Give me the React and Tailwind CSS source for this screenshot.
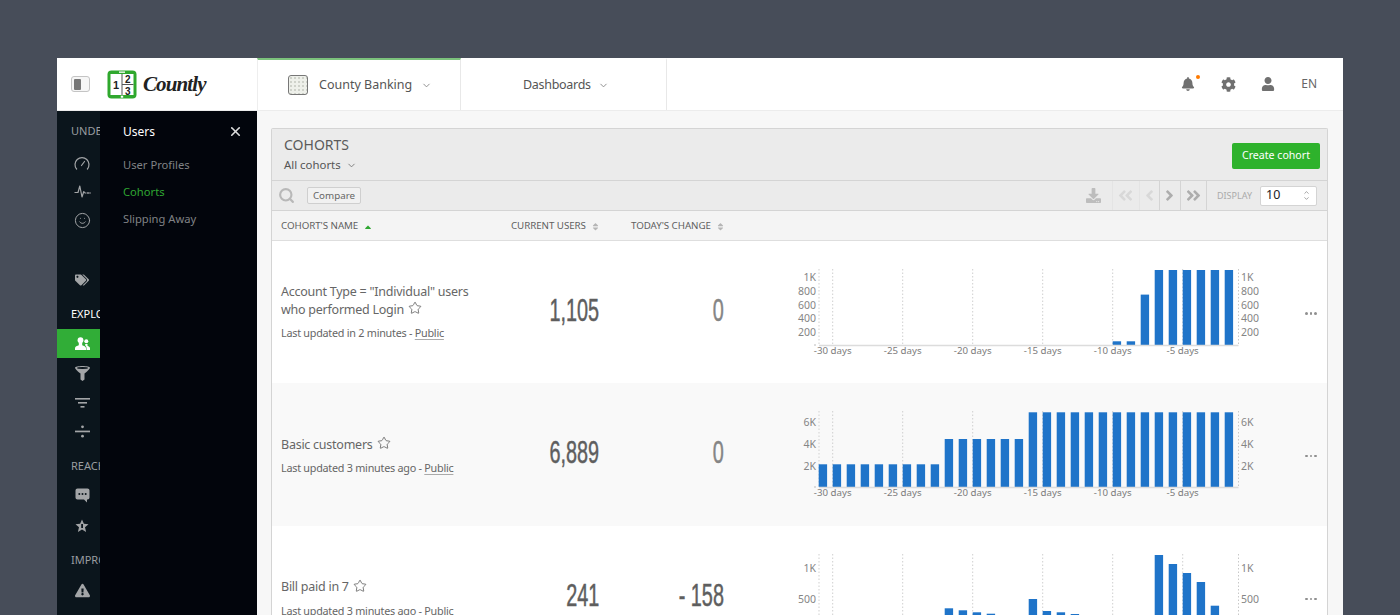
import React from "react";
import { Smile, ChevronDown, Star, X, Search } from "lucide-react";
import { FaTags, FaExclamationTriangle, FaBell, FaCog, FaUser, FaDownload, FaAngleDoubleLeft, FaAngleDoubleRight, FaAngleLeft, FaAngleRight, FaCaretUp, FaCaretDown } from "react-icons/fa";

const BX = (i) => 38.7 + 14 * i;
const TICKS = [
  [52.7, "-30 days"], [122.7, "-25 days"], [192.7, "-20 days"], [262.7, "-15 days"], [332.7, "-10 days"], [402.7, "-5 days"],
];

function Chart({ bars, labels }) {
  return (
    <svg width="520" height="143" viewBox="0 0 520 143" className="shrink-0">
      <line x1="39" y1="28" x2="39" y2="104" stroke="#d8d8d8" strokeWidth="1.2" strokeDasharray="1.5 2" />
      <line x1="458.5" y1="28" x2="458.5" y2="104" stroke="#c8c8c8" strokeWidth="1" strokeDasharray="1.5 2" />
      {TICKS.map(([x]) => (
        <line key={x} x1={x} y1="28" x2={x} y2="104" stroke="#cfcfcf" strokeWidth="1" strokeDasharray="1.5 2" />
      ))}
      <line x1="34" y1="104" x2="36" y2="104" stroke="#bbb" strokeWidth="1" />
      {Object.entries(bars).map(([i, h]) => (
        <rect key={i} x={BX(+i)} y={104 - h} width="8.4" height={h} fill="#1f74c9" />
      ))}
      <line x1="39" y1="104.5" x2="458.5" y2="104.5" stroke="#dcdcdc" strokeWidth="1.6" />
      {labels.map(([t, y]) => (
        <React.Fragment key={t}>
          <text x="36" y={y} textAnchor="end" dominantBaseline="middle" fill="#858585" fontSize="10.5" fontFamily="'Noto Sans', sans-serif">{t}</text>
          <text x="461" y={y} textAnchor="start" dominantBaseline="middle" fill="#858585" fontSize="10.5" fontFamily="'Noto Sans', sans-serif">{t}</text>
        </React.Fragment>
      ))}
      {TICKS.map(([x, t]) => (
        <text key={t} x={x} y="110.6" textAnchor="middle" dominantBaseline="middle" fill="#7c7c7c" fontSize="9.7" fontFamily="'Noto Sans', sans-serif">{t}</text>
      ))}
    </svg>
  );
}

function range(a, b, h) {
  const o = {};
  for (let i = a; i <= b; i++) o[i] = h;
  return o;
}

const rows = [
  {
    name: <>Account Type = "Individual" users<br />who performed Login</>,
    meta: "Last updated in 2 minutes - ",
    users: "1,105",
    change: "0",
    changeDark: false,
    bg: "bg-white",
    h: "h-[142px]",
    nameShift: "pt-0",
    bars: { 21: 3.7, 22: 3.7, 23: 50.4, ...range(24, 29, 75) },
    labels: [["1K", 37], ["800", 51], ["600", 65], ["400", 78.5], ["200", 92]],
  },
  {
    name: "Basic customers",
    meta: "Last updated 3 minutes ago - ",
    users: "6,889",
    change: "0",
    changeDark: false,
    bg: "bg-[#f9f9f9]",
    h: "h-[143px]",
    nameShift: "pt-[3px]",
    bars: { ...range(0, 8, 22.7), ...range(9, 14, 48), ...range(15, 29, 74.7) },
    labels: [["6K", 40], ["4K", 62], ["2K", 83.7]],
  },
  {
    name: "Bill paid in 7",
    meta: "Last updated 3 minutes ago - ",
    users: "241",
    change: "- 158",
    changeDark: true,
    bg: "bg-white",
    h: "h-[143px]",
    nameShift: "pt-[2px]",
    bars: { 9: 21.7, 10: 19.7, 11: 17.7, 12: 16.3, 15: 31, 16: 19, 17: 17.7, 18: 16, 24: 75, 25: 66, 26: 57, 27: 48, 28: 24.3 },
    labels: [["1K", 43.5], ["500", 74.5]],
  },
];

function Row({ r }) {
  return (
    <div className={`flex items-center shrink-0 ${r.h} ${r.bg}`}>
      <div className={`w-[230px] shrink-0 pl-[9px] ${r.nameShift}`}>
        <div className="text-[12.5px] leading-[18px] text-[#666] tracking-[-0.25px]">
          {r.name}
          <Star className="inline-block ml-[4px] mb-[5px] text-[#555]" size={14} strokeWidth={1.3} />
        </div>
        <div className="mt-[5px] text-[10.8px] leading-[16px] text-[#666] tracking-[-0.25px]">
          {r.meta}
          <span className="underline underline-offset-2 decoration-[#aaa]">Public</span>
        </div>
      </div>
      <div className="w-[97px] shrink-0 text-right -mt-[4px]">
        <span className="inline-block origin-right scale-x-[0.62] text-[32px] leading-none text-[#5e5e5e] [-webkit-text-stroke:0.5px_currentColor] font-['Liberation_Sans_Narrow','Liberation_Sans',sans-serif]">{r.users}</span>
      </div>
      <div className="w-[125px] shrink-0 text-right -mt-[4px]">
        <span className={`inline-block origin-right scale-x-[0.62] text-[32px] leading-none [-webkit-text-stroke:0.5px_currentColor] font-['Liberation_Sans_Narrow','Liberation_Sans',sans-serif] ${r.changeDark ? "text-[#5e5e5e]" : "text-[#858585]"}`}>{r.change}</span>
      </div>
      <div className="ml-[56px]">
        <Chart bars={r.bars} labels={r.labels} />
      </div>
      <div className="ml-[5px] mt-[3px] flex gap-[2px]">
        <span className="size-[2.5px] rounded-full bg-[#8f8f8f]" />
        <span className="size-[2.5px] rounded-full bg-[#8f8f8f]" />
        <span className="size-[2.5px] rounded-full bg-[#8f8f8f]" />
      </div>
    </div>
  );
}

function SortHead({ label, w, active }) {
  return (
    <div className={`flex items-center gap-[5px] ${w} shrink-0`}>
      <span className="text-[9.75px] text-[#5f5f5f] uppercase tracking-[-0.05px]">{label}</span>
      {active ? (
        <FaCaretUp size={10} className="text-[#2fa732] mt-[1px]" />
      ) : (
        <span className="flex flex-col text-[#b5b5b5] -space-y-[5px]">
          <FaCaretUp size={9} />
          <FaCaretDown size={9} />
        </span>
      )}
    </div>
  );
}

function RailIcon({ children, active, className = "" }) {
  return (
    <div className={`h-[29px] shrink-0 flex items-center justify-center pl-[7px] ${active ? "bg-[#31ad37] text-white" : "text-[#a3a5a7]"} ${className}`}>
      {children}
    </div>
  );
}

function RailLabel({ children, white, className = "" }) {
  return (
    <div className={`h-[18px] shrink-0 pl-[14px] text-[11px] leading-[18px] whitespace-nowrap overflow-hidden ${white ? "text-white" : "text-[#9a9da0]"} ${className}`}>
      {children}
    </div>
  );
}

function Logo() {
  return (
    <div className="flex items-center gap-[6px]">
      <svg width="30" height="29" viewBox="0 0 30 29">
        <rect x="0.5" y="0.5" width="29" height="28" rx="4" fill="#2fa82d" />
        <rect x="3.5" y="4" width="23" height="21" fill="#fff" />
        <rect x="12" y="1.5" width="6" height="1.3" fill="#fff" />
        <rect x="13.8" y="25.7" width="2.4" height="2" fill="#fff" />
        <line x1="15" y1="4" x2="15" y2="25" stroke="#555" strokeWidth="1" />
        <line x1="15" y1="14.5" x2="26.5" y2="14.5" stroke="#555" strokeWidth="1" />
        <text x="6" y="19" fontSize="11" fontWeight="700" fill="#222" fontFamily="'Liberation Sans', sans-serif">1</text>
        <text x="18" y="13" fontSize="10" fontWeight="700" fill="#222" fontFamily="'Liberation Sans', sans-serif">2</text>
        <text x="18" y="24.5" fontSize="10" fontWeight="700" fill="#222" fontFamily="'Liberation Sans', sans-serif">3</text>
      </svg>
      <span className="text-[21px] leading-none font-bold italic text-[#222] tracking-[-0.9px] font-['Liberation_Serif',serif]">Countly</span>
    </div>
  );
}

export default function App() {
  return (
    <div className="h-[615px] overflow-hidden bg-[#474d59] pt-[58px] px-[57px] font-['Noto_Sans',sans-serif]">
      <div className="h-[557px] w-[1286px] bg-white flex flex-col overflow-hidden">
        {/* top bar */}
        <div className="h-[53px] shrink-0 flex items-stretch bg-white border-b border-[#ececec]">
          <div className="w-[200px] shrink-0 flex items-center pl-[14px]">
            <div className="w-[19px] h-[16px] rounded-[3px] border border-[#c4c4c4] bg-[#f6f6f6] flex p-[1.5px] mr-[17px]">
              <span className="w-[7px] h-full bg-[#777] rounded-[1px]" />
            </div>
            <Logo />
          </div>
          <div className="w-[204px] shrink-0 border-t-2 border-[#7cc27c] border-r border-r-[#e8e8e8] border-l border-l-[#eeeeee] flex items-center pl-[30px]">
            <div className="size-[20px] rounded-[3px] border border-[#777] bg-[#eef0ea] mr-[11px] bg-[radial-gradient(#cfd2ca_1px,transparent_1px)] bg-[length:4px_4px]" />
            <span className="text-[12.5px] text-[#555]">County Banking</span>
            <ChevronDown size={11} className="ml-[9px] text-[#888]" />
          </div>
          <div className="w-[206px] shrink-0 border-t-2 border-t-transparent border-r border-[#e8e8e8] flex items-center pl-[62px]">
            <span className="text-[12.5px] text-[#555] tracking-[-0.3px]">Dashboards</span>
            <ChevronDown size={11} className="ml-[7px] text-[#888]" />
          </div>
          <div className="flex-1 flex items-center justify-end pr-[26px] text-[#707070]">
            <div className="relative mr-[26px]">
              <FaBell size={14} />
              <span className="absolute -top-[2px] -right-[5px] size-[4px] rounded-full bg-[#ff7a00]" />
            </div>
            <FaCog size={15} className="mr-[25px]" />
            <FaUser size={14} className="mr-[26px]" />
            <span className="text-[12px] text-[#666]">EN</span>
          </div>
        </div>

        <div className="flex-1 flex min-h-0">
          {/* rail */}
          <div className="w-[43px] shrink-0 bg-[#0b151c] flex flex-col pt-[11px]">
            <RailLabel>UNDERSTAND</RailLabel>
            <div className="mt-2" />
            <RailIcon>
              <svg width="16" height="14" viewBox="0 0 16 14" fill="none" stroke="#a3a5a7" strokeWidth="1.2" strokeLinecap="round">
                <path d="M2.6 13A7 7 0 1 1 13.4 13" />
                <path d="M7.5 9.5L10.5 5.5" />
              </svg>
            </RailIcon>
            <RailIcon>
              <svg width="17" height="15" viewBox="0 0 17 15" fill="none" stroke="#a3a5a7" strokeWidth="1.2" strokeLinejoin="round">
                <path d="M0.5 8.5H4L5.8 2L8 13L9.8 7.5L11 9H12.5" />
                <circle cx="14" cy="9" r="0.9" fill="#a3a5a7" stroke="none" />
                <circle cx="16" cy="9" r="0.8" fill="#a3a5a7" stroke="none" />
              </svg>
            </RailIcon>
            <RailIcon><Smile size={17} strokeWidth={1.4} /></RailIcon>
            <div className="h-[30px] shrink-0" />
            <RailIcon><FaTags size={14} /></RailIcon>
            <RailLabel white className="mt-[11px]">EXPLORE</RailLabel>
            <div className="mt-[6px]" />
            <RailIcon active>
              <svg width="15" height="13" viewBox="0 0 15 13" fill="#fff">
                <circle cx="5.5" cy="3.2" r="2.9" />
                <path d="M0 13V11.2C0 9.5 2.3 8.6 3.8 8.2V6H7.2V8.2C8.7 8.6 11 9.5 11 11.2V13Z" />
                <circle cx="11.3" cy="4.2" r="2" />
                <path d="M11.5 13H15V11.2C15 10 13.5 9.2 12.5 8.8V7H10.2V8.5C11.2 9.2 11.5 10.2 11.5 11.5Z" />
              </svg>
            </RailIcon>
            <div className="mt-[1px]" />
            <RailIcon>
              <svg width="15" height="15" viewBox="0 0 15 15" fill="#a3a5a7">
                <path d="M0 1.8C0 0.8 3.4 0 7.5 0S15 0.8 15 1.8C15 2.6 13.5 4.5 9.5 7.5V13.5L7.5 15L5.5 13.5V7.5C1.5 4.5 0 2.6 0 1.8Z" />
                <ellipse cx="7.5" cy="2" rx="5.5" ry="0.9" fill="#0b151c" />
              </svg>
            </RailIcon>
            <RailIcon>
              <svg width="15" height="12" viewBox="0 0 15 12" fill="#a3a5a7">
                <rect x="0" y="1" width="15" height="1.6" />
                <rect x="3" y="5" width="9" height="1.6" />
                <rect x="5.5" y="9" width="4" height="1.6" />
              </svg>
            </RailIcon>
            <RailIcon>
              <svg width="15" height="13" viewBox="0 0 15 13" fill="#a3a5a7">
                <rect x="0" y="5.6" width="15" height="1.7" />
                <circle cx="7.5" cy="1.8" r="1.4" />
                <circle cx="7.5" cy="11.2" r="1.4" />
              </svg>
            </RailIcon>
            <RailLabel className="mt-[11px]">REACH</RailLabel>
            <div className="mt-[6px]" />
            <RailIcon>
              <svg width="15" height="15" viewBox="0 0 15 15">
                <path d="M2.5 0.5H12.5C13.6 0.5 14.5 1.4 14.5 2.5V9.5C14.5 10.6 13.6 11.5 12.5 11.5H12V14.5L9 11.5H2.5C1.4 11.5 0.5 10.6 0.5 9.5V2.5C0.5 1.4 1.4 0.5 2.5 0.5Z" fill="#a3a5a7" />
                <circle cx="4.3" cy="6" r="1" fill="#0b151c" />
                <circle cx="7.5" cy="6" r="1" fill="#0b151c" />
                <circle cx="10.7" cy="6" r="1" fill="#0b151c" />
              </svg>
            </RailIcon>
            <div className="mt-[1px]" />
            <RailIcon>
              <svg width="14" height="14" viewBox="0 0 14 14">
                <path d="M7 0.5L8.9 4.8L13.5 5.2L10 8.3L11.1 13L7 10.5L2.9 13L4 8.3L0.5 5.2L5.1 4.8Z" fill="#a3a5a7" />
                <rect x="6.2" y="5" width="1.8" height="4" fill="#0b151c" />
              </svg>
            </RailIcon>
            <RailLabel className="mt-[11px]">IMPROVE</RailLabel>
            <div className="mt-[7px]" />
            <RailIcon><FaExclamationTriangle size={15} /></RailIcon>
          </div>
          {/* sub nav */}
          <div className="w-[157px] shrink-0 bg-[#02050c] pt-[11px] pl-[23px] pr-[14px]">
            <div className="flex items-center justify-between h-[19px] text-white">
              <span className="text-[12px]">Users</span>
              <X size={15} strokeWidth={2.6} className="text-[#ddd]" />
            </div>
            <div className="mt-[15px] flex flex-col gap-[9px] text-[11.2px] leading-[18px] text-[#808285]">
              <span>User Profiles</span>
              <span className="text-[#2fa732]">Cohorts</span>
              <span>Slipping Away</span>
            </div>
          </div>
          {/* main */}
          <div className="flex-1 min-w-0 bg-[#f7f7f7] pt-[17px] pl-[14px] pr-[15px]">
            <div className="border border-[#d4d4d4] border-b-0 rounded-t-[2px] flex flex-col bg-white">
              <div className="h-[52px] shrink-0 bg-[#ebebeb] border-b border-[#d4d4d4] flex items-center justify-between pl-[12px] pr-[7px]">
                <div>
                  <div className="text-[14px] leading-[18px] text-[#5a5a5a]">COHORTS</div>
                  <div className="mt-[3px] flex items-center text-[11.4px] leading-[16px] text-[#555]">
                    All cohorts
                    <ChevronDown size={11} className="ml-[5px] text-[#777]" />
                  </div>
                </div>
                <button className="mt-[2px] w-[88px] h-[26px] rounded-[2px] bg-[#2eb22c] text-white text-[10.6px]">Create cohort</button>
              </div>
              <div className="h-[30px] shrink-0 bg-[#ebebeb] border-b border-[#d4d4d4] flex items-center">
                <Search size={17} strokeWidth={3} className="ml-[6px] text-[#b8b8b8]" />
                <button className="ml-[12px] w-[54px] h-[17px] rounded-[2px] border border-[#cfcfcf] bg-[#f1f1f1] text-[9.8px] leading-none text-[#666]">Compare</button>
                <div className="flex-1" />
                <FaDownload size={15} className="text-[#bdbdbd] mr-[11px]" />
                <div className="w-[27px] h-full flex items-center justify-center border-l border-[#e4e4e4]"><FaAngleDoubleLeft size={17} className="text-[#d8d8d8]" /></div>
                <div className="w-[20px] h-full flex items-center justify-center border-l border-[#e4e4e4]"><FaAngleLeft size={17} className="text-[#d8d8d8]" /></div>
                <div className="w-[21px] h-full flex items-center justify-center border-l border-[#d4d4d4]"><FaAngleRight size={17} className="text-[#adadad]" /></div>
                <div className="w-[27px] h-full flex items-center justify-center border-x border-[#d4d4d4]"><FaAngleDoubleRight size={17} className="text-[#adadad]" /></div>
                <span className="ml-[10px] text-[9px] text-[#aaa]">DISPLAY</span>
                <div className="ml-[8px] mr-[10px] w-[57px] h-[20px] rounded-[2px] border border-[#d4d4d4] bg-white flex items-center justify-between pl-[5px] pr-[6px]">
                  <span className="text-[12.5px] text-[#222]">10</span>
                  <span className="flex flex-col text-[#666] -space-y-[1px]">
                    <ChevronDown size={7} className="rotate-180" />
                    <ChevronDown size={7} />
                  </span>
                </div>
              </div>
              <div className="h-[30px] shrink-0 bg-[#f4f4f4] border-b border-[#dedede] flex items-center pl-[9px] pt-[2px]">
                <SortHead label="Cohort's Name" w="w-[230px]" active />
                <SortHead label="Current Users" w="w-[120px]" />
                <SortHead label="Today's Change" w="w-[150px]" />
              </div>
              {rows.map((r, i) => <Row key={i} r={r} />)}
            </div>
          </div>
        </div>
      </div>
    </div>
  );
}
